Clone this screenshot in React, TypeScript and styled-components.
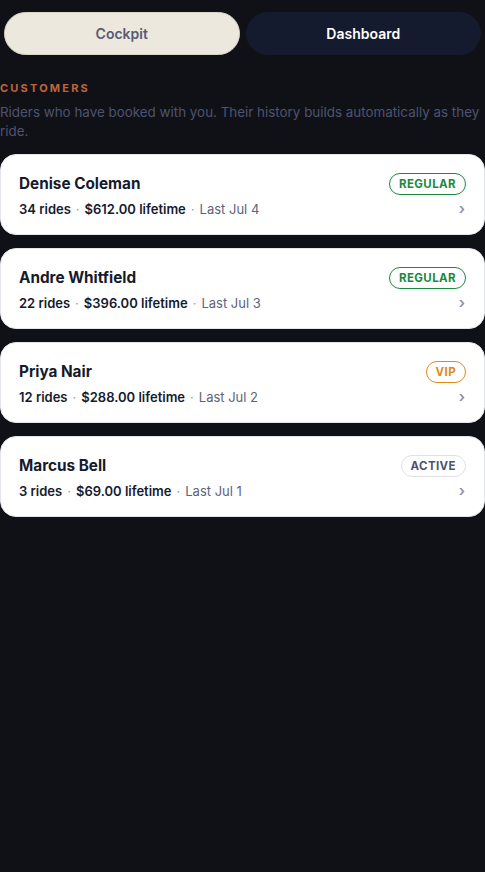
import React from "react";
import styled, { createGlobalStyle } from "styled-components";

const Global = createGlobalStyle`
  html, body { margin: 0; padding: 0; background: #101117; }
  body { font-family: Inter, "Noto Sans", sans-serif; -webkit-font-smoothing: antialiased; }
  * { box-sizing: border-box; }
`;

const Page = styled.div`
  min-height: 872px;
  background: #101117;
  display: flex;
  flex-direction: column;
`;

const Tabs = styled.div`
  display: grid;
  grid-template-columns: 1fr 1fr;
  gap: 6px;
  padding: 12px 4px 0 4px;
`;

const Tab = styled.button<{ $active?: boolean }>`
  height: 43px;
  border-radius: 22px;
  border: 1px solid ${(p) => (p.$active ? "#d9d4c7" : "#151b2e")};
  background: ${(p) => (p.$active ? "#ece8de" : "#151b2e")};
  color: ${(p) => (p.$active ? "#565b75" : "#ffffff")};
  font-family: Inter, sans-serif;
  font-size: 14px;
  font-weight: 600;
  cursor: pointer;
`;

const Section = styled.div`
  padding: 26px 0 0 0;
`;

const Eyebrow = styled.div`
  color: #c0643a;
  font-size: 11px;
  font-weight: 700;
  letter-spacing: 2.2px;
  line-height: 14px;
  text-transform: uppercase;
`;

const Desc = styled.p`
  margin: 8px 0 0 0;
  color: #4e5370;
  font-size: 13.4px;
  line-height: 19px;
`;

const List = styled.div`
  display: flex;
  flex-direction: column;
  gap: 13px;
  margin-top: 13px;
`;

const Card = styled.div`
  background: #ffffff;
  border: 1px solid #e3e5ea;
  border-radius: 16px;
  padding: 18px 18px 16px 18px;
  display: flex;
  flex-direction: column;
  gap: 5px;
`;

const Row = styled.div`
  display: flex;
  align-items: center;
  justify-content: space-between;
`;

const Name = styled.div`
  color: #151a2d;
  font-size: 15.3px;
  font-weight: 650;
  line-height: 20px;
`;

const Meta = styled.div`
  display: flex;
  align-items: center;
  font-size: 13px;
  line-height: 18px;
  color: #151a2d;
`;

const Strong = styled.span`
  font-weight: 600;
`;

const Dot = styled.span`
  color: #9a9db0;
  margin: 0 5px;
`;

const Muted = styled.span`
  color: #5e6379;
`;

const Chevron = styled.span`
  color: #8d91a5;
  font-size: 15px;
  font-weight: 600;
  line-height: 18px;
  margin-right: 1px;
`;

const tones = {
  regular: { c: "#1a8a3f", b: "#1a8a3f" },
  vip: { c: "#e08a1e", b: "#e08a1e" },
  active: { c: "#4e5370", b: "#dfe1e7" },
} as const;

const Badge = styled.span<{ $tone: keyof typeof tones }>`
  display: inline-flex;
  align-items: center;
  height: 22px;
  padding: 0 9px;
  border-radius: 11px;
  border: 1px solid ${(p) => tones[p.$tone].b};
  color: ${(p) => tones[p.$tone].c};
  font-size: 11.5px;
  font-weight: 700;
  letter-spacing: 0.4px;
`;

const customers = [
  { name: "Denise Coleman", rides: 34, total: "$612.00", last: "Jul 4", tone: "regular" as const },
  { name: "Andre Whitfield", rides: 22, total: "$396.00", last: "Jul 3", tone: "regular" as const },
  { name: "Priya Nair", rides: 12, total: "$288.00", last: "Jul 2", tone: "vip" as const },
  { name: "Marcus Bell", rides: 3, total: "$69.00", last: "Jul 1", tone: "active" as const },
];

export default function App() {
  return (
    <Page>
      <Global />
      <Tabs>
        <Tab $active>Cockpit</Tab>
        <Tab>Dashboard</Tab>
      </Tabs>
      <Section>
        <Eyebrow>Customers</Eyebrow>
        <Desc>Riders who have booked with you. Their history builds automatically as they ride.</Desc>
        <List>
          {customers.map((c) => (
            <Card key={c.name}>
              <Row>
                <Name>{c.name}</Name>
                <Badge $tone={c.tone}>{c.tone.toUpperCase()}</Badge>
              </Row>
              <Row>
                <Meta>
                  <Strong>{c.rides} rides</Strong>
                  <Dot>·</Dot>
                  <Strong>{c.total} lifetime</Strong>
                  <Dot>·</Dot>
                  <Muted>Last {c.last}</Muted>
                </Meta>
                <Chevron>›</Chevron>
              </Row>
            </Card>
          ))}
        </List>
      </Section>
    </Page>
  );
}
